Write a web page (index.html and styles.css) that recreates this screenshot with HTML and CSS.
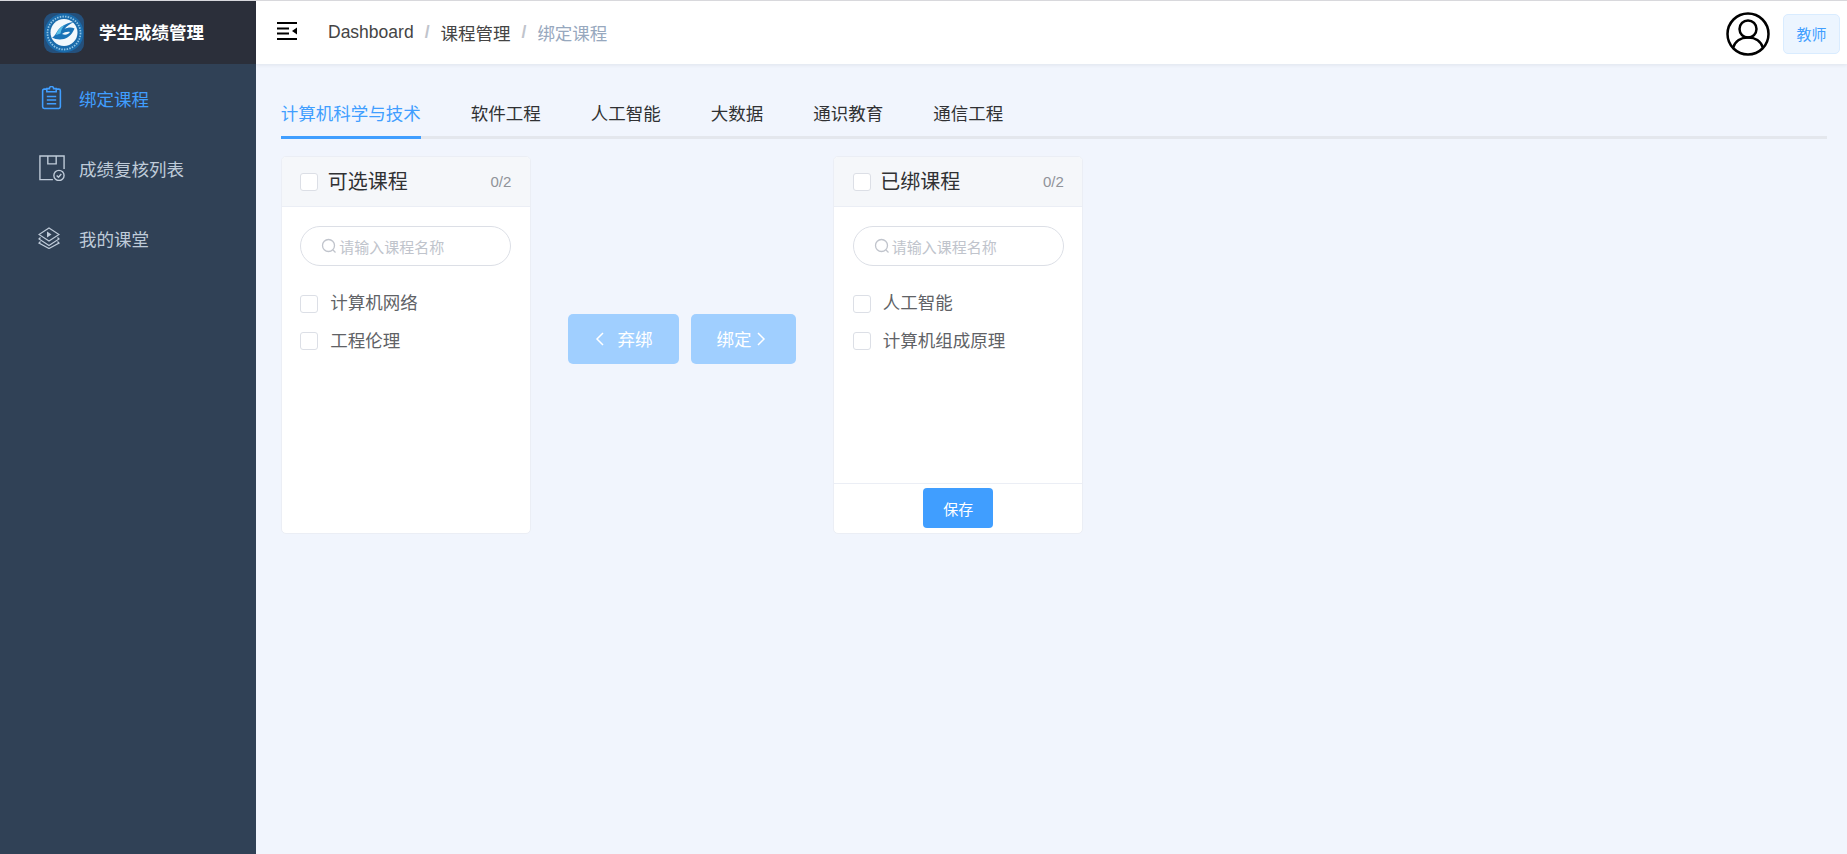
FILE: index.html
```html
<!DOCTYPE html>
<html lang="zh-CN">
<head>
<meta charset="utf-8">
<title>绑定课程</title>
<link rel="stylesheet" href="styles.css">
</head>
<body>
<div class="app">
  <aside class="sidebar">
    <div class="brand">
      <svg class="logo" viewBox="0 0 40 40" width="40" height="40">
        <rect width="40" height="40" rx="9" fill="#24507c"/>
        <circle cx="20" cy="20" r="19.500" fill="#1a6bab"/>
        <circle cx="20" cy="20" r="16.500" fill="none" stroke="#8fc3e4" stroke-width="1.800" stroke-dasharray="1.500 1.200"/>
        <circle cx="20" cy="19.500" r="13.500" fill="#f2f8fc"/>
        <path d="M8 24.500c3-1 4-5 7-8.500 3-3.500 9-6.500 15-7-4 2-7.500 4-9.500 7 3-1.500 7-2 10-.5-1.500 4-5 9-10.500 10.500-4 1-9 .5-12-1.500z" fill="#1a74b8"/>
        <path d="M12 22c1-4 4-8 9-10.500-2.500 3-4 5.500-4.500 9z" fill="#56bde6"/>
        <path d="M18 21c2.500-2 5.500-2.500 8-2-2 2.500-4.500 3.500-8 2z" fill="#f2f8fc"/>
      </svg>
      <span class="brand-name">学生成绩管理</span>
    </div>
    <nav class="menu">
      <a class="menu-item active">
        <svg class="menu-icon icon-bind" viewBox="3 1 19 23" width="21" height="24" fill="none" stroke="currentColor" stroke-width="1.500"><path d="M8 4H5.500A1.500 1.500 0 0 0 4 5.500V21a1.500 1.500 0 0 0 1.500 1.500h14A1.500 1.500 0 0 0 21 21V5.500A1.500 1.500 0 0 0 19.500 4H17"/><path d="M8 6.500V3.500h2.500a2 2 0 0 1 4 0H17v3z"/><path d="M8 11h9M8 14.500h9M8 18h9"/></svg>
        <span>绑定课程</span>
      </a>
      <a class="menu-item">
        <svg class="menu-icon icon-review" viewBox="0 0 28 28" width="26" height="26" fill="none" stroke="currentColor" stroke-width="1.500"><path d="M15 26.500H1V1h26v14"/><path d="M9.500 1v8.500h9V1"/><circle cx="21.500" cy="22" r="5.500"/><path d="M19 22l2 2 3-3.500"/></svg>
        <span>成绩复核列表</span>
      </a>
      <a class="menu-item">
        <svg class="menu-icon icon-class" viewBox="1 1 22 22" width="22" height="22" fill="none" stroke="currentColor" stroke-width="1.200"><path d="M12 2 22 8.500 12 15 2 8.500z"/><path d="M3.500 11.500 2 13l10 6.500L22 13l-1.500-1.500"/><path d="M3.500 15.500 2 17l10 5.500L22 17l-1.500-1.500"/><path d="M10 5.500l4.500 3-4.500 3z" fill="currentColor" stroke="none"/></svg>
        <span>我的课堂</span>
      </a>
    </nav>
  </aside>
  <div class="main">
    <header class="navbar">
      <svg class="hamburger" viewBox="0 0 20 18" width="20" height="18"><path d="M0 1h20M0 17h20" stroke="#000" stroke-width="2"/><path d="M0 6.500h12M0 11.500h12" stroke="#000" stroke-width="2"/><path d="M20 5.500v7L15 9z" fill="#000"/></svg>
      <div class="crumbs">
        <span class="crumb">Dashboard</span><span class="sep">/</span>
        <span class="crumb">课程管理</span><span class="sep">/</span>
        <span class="crumb current">绑定课程</span>
      </div>
      <div class="user">
        <svg class="avatar" viewBox="0 0 44 44" width="44" height="44" fill="none" stroke="#000" stroke-width="2.500"><circle cx="22" cy="22" r="20.500"/><circle cx="22" cy="17" r="8.500"/><path d="M7 36c2-7 8-10.500 15-10.500S35 29 37 36"/></svg>
        <span class="tag">教师</span>
      </div>
    </header>
    <section class="content">
      <div class="tabs">
        <a class="tab active">计算机科学与技术</a>
        <a class="tab">软件工程</a>
        <a class="tab">人工智能</a>
        <a class="tab">大数据</a>
        <a class="tab">通识教育</a>
        <a class="tab">通信工程</a>
      </div>
      <div class="transfer">
        <div class="panel">
          <div class="panel-head">
            <span class="check"></span><span class="panel-title">可选课程</span><span class="count">0/2</span>
          </div>
          <div class="panel-body">
            <div class="search">
              <svg class="search-icon" viewBox="0 0 16 16" width="16" height="16" fill="none" stroke="#c0c4cc" stroke-width="1.300"><circle cx="7.500" cy="7.500" r="6"/><path d="M12 12l2.500 2.500"/></svg>
              <span>请输入课程名称</span>
            </div>
            <ul class="list">
              <li class="list-item"><span class="check"></span><span>计算机网络</span></li>
              <li class="list-item"><span class="check"></span><span>工程伦理</span></li>
            </ul>
          </div>
        </div>
        <div class="actions">
          <button class="btn wide"><svg class="chev" viewBox="0 0 10 16" width="10" height="16" fill="none" stroke="#fff" stroke-width="1.500"><path d="M8 2 2 8l6 6"/></svg><span>弃绑</span></button>
          <button class="btn"><span>绑定</span><svg class="chev" viewBox="0 0 10 16" width="10" height="16" fill="none" stroke="#fff" stroke-width="1.500"><path d="M2 2l6 6-6 6"/></svg></button>
        </div>
        <div class="panel">
          <div class="panel-head">
            <span class="check"></span><span class="panel-title">已绑课程</span><span class="count">0/2</span>
          </div>
          <div class="panel-body">
            <div class="search">
              <svg class="search-icon" viewBox="0 0 16 16" width="16" height="16" fill="none" stroke="#c0c4cc" stroke-width="1.300"><circle cx="7.500" cy="7.500" r="6"/><path d="M12 12l2.500 2.500"/></svg>
              <span>请输入课程名称</span>
            </div>
            <ul class="list">
              <li class="list-item"><span class="check"></span><span>人工智能</span></li>
              <li class="list-item"><span class="check"></span><span>计算机组成原理</span></li>
            </ul>
          </div>
          <div class="panel-foot"><button class="save">保存</button></div>
        </div>
      </div>
    </section>
  </div>
</div>
</body>
</html>
```
FILE: styles.css
```css
* { box-sizing: border-box; }
html, body { margin: 0; height: 100%; overflow: hidden; }
body {
  background: #f1f5fd;
  border-top: 1px solid #d8d8dc;
  font-family: "Liberation Sans", "Noto Sans CJK SC", sans-serif;
  font-size: 17.5px;
}
.app { display: flex; height: 853px; }
.sidebar { width: 256px; flex: none; background: #304156; }
.brand {
  height: 63px;
  background: #2b2f3a;
  display: flex;
  align-items: center;
  padding-left: 44px;
  gap: 15px;
}
.logo { flex: none; }
.brand-name { color: #fff; font-size: 17.5px; font-weight: 700; margin-top: -2px; }
.menu { display: flex; flex-direction: column; margin-top: -1px; }
.menu-item {
  height: 70px;
  display: flex;
  align-items: center;
  color: #bfcbd9;
  position: relative;
  padding-left: 79px;
}
.menu-item.active { color: #409eff; }
.menu-icon { position: absolute; top: 50%; transform: translateY(-50%); }
.icon-bind { left: 41px; }
.icon-review { left: 39px; }
.icon-class { left: 38px; }
.main { flex: 1; min-width: 0; display: flex; flex-direction: column; }
.navbar {
  height: 63px;
  background: #fff;
  box-shadow: 0 1px 4px rgba(0, 21, 41, .08);
  display: flex;
  align-items: center;
  padding: 0 7px 0 21px;
  position: relative;
}
.hamburger { flex: none; margin-top: -3px; }
.crumbs { margin-left: 31px; display: flex; align-items: center; color: #303133; }
.crumb { color: #444; }
.crumb.current { color: #97a8be; }
.sep { color: #c0c4cc; font-weight: 700; margin: 0 11px; }
.user { margin-left: auto; display: flex; align-items: center; gap: 13px; margin-top: 2px; }
.tag {
  width: 57px;
  height: 40px;
  background: #ecf5ff;
  border: 1px solid #d9ecff;
  border-radius: 5px;
  color: #409eff;
  font-size: 15px;
  display: flex;
  align-items: center;
  justify-content: center;
}
.content { padding: 27px 20px 0 24.800px; flex: 1; }
.tabs {
  display: flex;
  gap: 50px;
  height: 48px;
  border-bottom: 3px solid #e4e7ed;
}
.tab { color: #303133; height: 48px; line-height: 47px; white-space: nowrap; }
.tab.active { color: #409eff; border-bottom: 3px solid #409eff; }
.transfer { display: flex; align-items: center; margin-top: 17px; }
.panel {
  width: 250px;
  height: 378px;
  background: #fff;
  border: 1px solid #ebeef5;
  border-radius: 5px;
  display: flex;
  flex-direction: column;
  overflow: hidden;
  flex: none;
}
.panel-head {
  height: 50px;
  flex: none;
  background: #f5f7fa;
  border-bottom: 1px solid #ebeef5;
  display: flex;
  align-items: center;
  padding: 0 18.500px;
}
.check {
  width: 18px;
  height: 18px;
  flex: none;
  background: #fff;
  border: 1px solid #dcdfe6;
  border-radius: 3px;
}
.panel-title { font-size: 20px; color: #303133; margin-left: 9.500px; padding-bottom: 2px; }
.count { margin-left: auto; font-size: 15px; color: #909399; }
.panel-body { flex: 1; padding: 19px 18.500px 0; }
.search {
  height: 40px;
  border: 1px solid #dcdfe6;
  border-radius: 20px;
  display: flex;
  align-items: center;
  padding-left: 20px;
  color: #c0c4cc;
  font-size: 15px;
  gap: 2px;
}
.search-icon { flex: none; }
.list { list-style: none; margin: 17px 0 0; padding: 0; }
.list-item {
  height: 37.500px;
  display: flex;
  align-items: center;
  gap: 12px;
  color: #606266;
}
.list-item .check { margin-top: 4px; }
.actions { width: 302.500px; flex: none; display: flex; justify-content: center; gap: 12px; margin-top: -13px; }
.btn {
  width: 105px;
  height: 50px;
  border: 0;
  border-radius: 5px;
  background: #a0cfff;
  color: #fff;
  font: inherit;
  display: flex;
  align-items: center;
  justify-content: center;
  gap: 4px;
  padding: 0 5px 0 0;
}
.btn.wide { width: 111px; gap: 13px; padding: 0; }
.panel-foot {
  height: 50px;
  flex: none;
  border-top: 1px solid #ebeef5;
  display: flex;
  justify-content: center;
  align-items: flex-start;
  padding-top: 4px;
}
.save {
  width: 70px;
  height: 40px;
  border: 0;
  border-radius: 4px;
  background: #409eff;
  color: #fff;
  font: inherit;
  font-size: 15px;
  padding: 0;
}
```
